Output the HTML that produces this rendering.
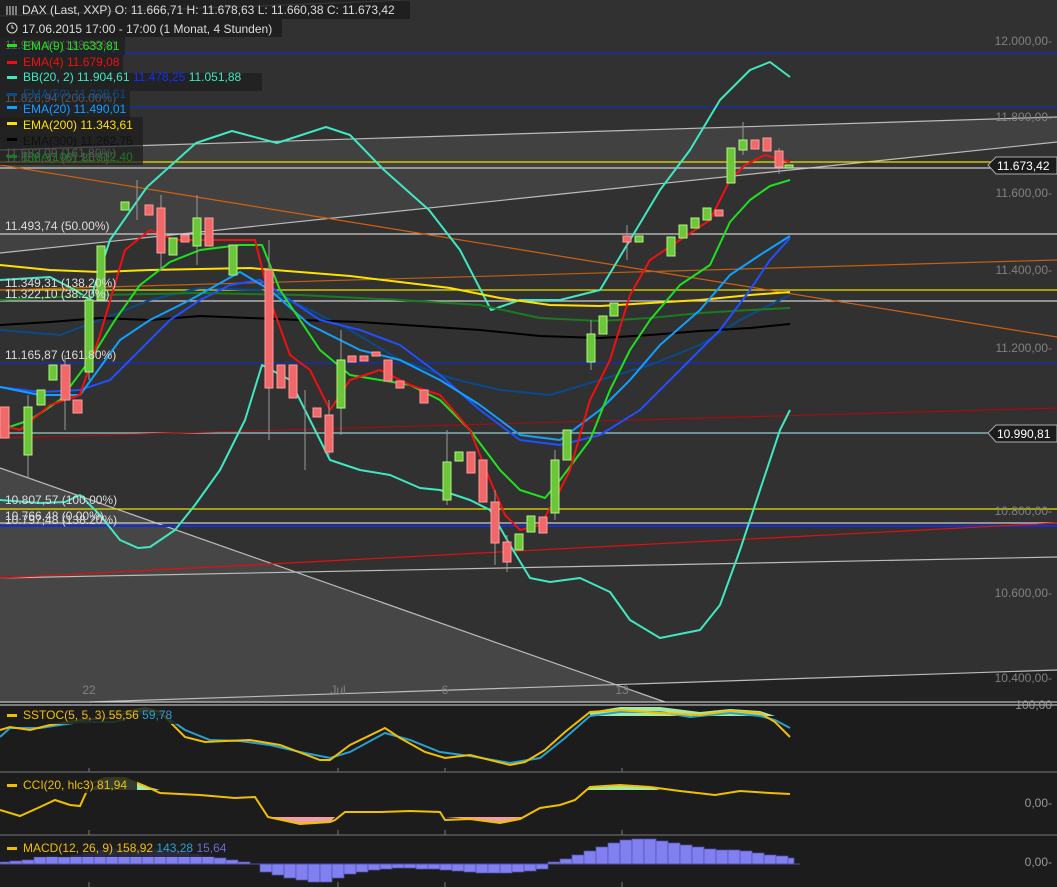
<!DOCTYPE html>
<html><head><meta charset="utf-8"><style>
html,body{margin:0;padding:0;background:#1c1c1c;}
svg{display:block;font-family:"Liberation Sans",sans-serif;}
</style></head><body>
<svg width="1057" height="887" viewBox="0 0 1057 887" xmlns="http://www.w3.org/2000/svg">
<rect x="0" y="0" width="1057" height="703" fill="#313131"/>
<polygon points="90,702 1057,670 1057,703" fill="#222"/>
<polygon points="0,468 665,702 0,702" fill="#464646"/>
<polygon points="0,150 1057,117 1057,142 0,253" fill="#414141"/>
<polygon points="0,0 410,0 0,16" fill="#404040"/>
<g fill="none" stroke-width="1.2">
<line x1="0" y1="16" x2="410" y2="0" stroke="#bbb"/>
<line x1="0" y1="150" x2="1057" y2="117" stroke="#bbb"/>
<line x1="0" y1="253" x2="1057" y2="142" stroke="#bbb"/>
<line x1="0" y1="468" x2="665" y2="702" stroke="#bbb"/>
<line x1="90" y1="702" x2="1057" y2="670" stroke="#bbb"/>
<line x1="0" y1="578" x2="1057" y2="557" stroke="#bbb"/>
<line x1="0" y1="53" x2="1057" y2="53" stroke="#1030c0"/>
<line x1="0" y1="107" x2="1057" y2="107" stroke="#1030c0"/>
<line x1="0" y1="162" x2="1057" y2="162" stroke="#e8e000"/>
<line x1="0" y1="168" x2="1057" y2="168" stroke="#ccc"/>
<line x1="0" y1="234" x2="1057" y2="234" stroke="#ccc"/>
<line x1="0" y1="290" x2="1057" y2="290" stroke="#e8e000"/>
<line x1="0" y1="301" x2="1057" y2="301" stroke="#ccc"/>
<line x1="0" y1="363" x2="1057" y2="363" stroke="#1030c0"/>
<line x1="0" y1="433" x2="1057" y2="433" stroke="#9cc"/>
<line x1="0" y1="509" x2="1057" y2="509" stroke="#e8e000"/>
<line x1="0" y1="523" x2="1057" y2="523" stroke="#ccc"/>
<line x1="0" y1="526" x2="1057" y2="526" stroke="#1030e0" stroke-width="2"/>
<line x1="0" y1="165" x2="1057" y2="337" stroke="#d06010"/>
<line x1="0" y1="290" x2="1057" y2="260" stroke="#c06010"/>
<line x1="0" y1="438" x2="1057" y2="408" stroke="#a01010"/>
<line x1="0" y1="578" x2="1057" y2="523" stroke="#e01010"/>
</g>
<g fill="none" stroke-width="2" stroke-linejoin="round">
<polyline stroke="#40e8c0" points="0,280 50,277 75,290 90,300 110,240 147,187 196,143 232,131 277,143 326,127 350,135 384,170 429,210 460,250 491,310 520,300 560,300 600,290 630,240 660,190 690,150 720,100 750,70 770,62 790,77"/>
<polyline stroke="#40e8c0" points="0,500 40,503 65,502 80,495 100,515 120,540 138,548 150,547 175,530 195,505 220,470 245,420 262,365 290,380 330,460 360,470 390,475 420,488 440,490 470,500 490,510 510,545 530,578 550,582 580,578 610,592 630,620 660,638 700,630 720,605 740,550 760,490 780,430 790,410"/>
<polyline stroke="#0a4a8a" points="0,330 60,335 100,320 150,300 200,288 260,290 300,305 350,330 400,360 450,378 500,390 550,395 600,380 650,365 700,345 740,320 790,295"/>
<polyline stroke="#1a7a20" points="0,300 100,295 200,293 300,295 400,300 480,305 540,318 600,321 650,318 700,313 750,310 790,308"/>
<polyline stroke="#000" points="0,325 50,322 100,318 150,320 200,316 250,318 300,320 360,322 420,326 480,330 540,336 600,338 650,335 700,331 750,328 790,324"/>
<polyline stroke="#ffe000" points="0,265 50,270 100,272 150,270 250,268 300,272 350,276 400,282 450,288 500,298 550,305 600,306 650,303 700,300 750,295 790,292"/>
<polyline stroke="#2050ff" points="0,387 40,392 80,390 110,380 140,350 170,320 200,300 230,285 260,280 290,300 320,320 360,330 400,345 440,375 480,410 520,440 560,445 600,435 640,410 680,370 720,330 750,290 770,260 790,238"/>
<polyline stroke="#10a0ff" points="0,387 40,395 80,395 120,340 150,320 190,300 240,272 270,290 310,325 360,350 400,360 440,380 480,405 520,435 560,440 600,410 630,380 660,345 700,310 730,275 760,255 790,236"/>
<polyline stroke="#20e020" points="0,430 30,420 60,400 90,360 115,320 140,285 170,262 200,250 240,245 262,245 280,290 300,320 320,350 350,375 380,380 410,385 440,400 470,430 500,470 520,490 545,498 560,480 590,440 610,390 630,350 650,320 680,285 710,265 730,222 750,200 770,186 790,180"/>
<polyline stroke="#f01010" points="0,425 20,430 50,405 80,395 100,335 125,250 150,230 175,240 210,240 255,240 270,300 290,355 310,370 330,410 350,380 380,370 410,385 440,395 470,430 490,480 505,515 520,530 540,525 555,500 570,470 590,400 610,360 630,295 650,260 680,240 710,220 730,180 745,165 765,155 790,162"/>
</g>
<g stroke-width="1">
<g stroke="#999">
<line x1="28" y1="395" x2="28" y2="478"/><line x1="65" y1="355" x2="65" y2="430"/><line x1="89" y1="290" x2="89" y2="380"/><line x1="137" y1="180" x2="137" y2="220"/><line x1="161" y1="195" x2="161" y2="270"/><line x1="197" y1="195" x2="197" y2="265"/><line x1="269" y1="240" x2="269" y2="440"/><line x1="305" y1="390" x2="305" y2="470"/><line x1="329" y1="400" x2="329" y2="455"/><line x1="341" y1="330" x2="341" y2="435"/><line x1="447" y1="430" x2="447" y2="505"/><line x1="495" y1="490" x2="495" y2="565"/><line x1="507" y1="535" x2="507" y2="572"/><line x1="555" y1="450" x2="555" y2="520"/><line x1="591" y1="320" x2="591" y2="370"/><line x1="627" y1="225" x2="627" y2="260"/><line x1="743" y1="122" x2="743" y2="155"/><line x1="779" y1="148" x2="779" y2="174"/>
</g>
<g fill="#f06868" stroke="#ff9c9c">
<rect x="0" y="407" width="9" height="31"/><rect x="61" y="365" width="9" height="35"/><rect x="73" y="400" width="9" height="13"/><rect x="145" y="205" width="8" height="10"/><rect x="157" y="208" width="8" height="45"/><rect x="181" y="235" width="8" height="7"/><rect x="205" y="218" width="8" height="28"/><rect x="265" y="270" width="8" height="118"/><rect x="277" y="365" width="8" height="23"/><rect x="289" y="365" width="8" height="33"/><rect x="313" y="408" width="8" height="9"/><rect x="325" y="415" width="8" height="37"/><rect x="348" y="356" width="8" height="6"/><rect x="360" y="356" width="8" height="5"/><rect x="372" y="352" width="8" height="4"/><rect x="384" y="360" width="8" height="21"/><rect x="396" y="381" width="8" height="7"/><rect x="420" y="390" width="8" height="13"/><rect x="467" y="452" width="8" height="21"/><rect x="479" y="460" width="8" height="42"/><rect x="491" y="502" width="8" height="41"/><rect x="503" y="542" width="8" height="20"/><rect x="539" y="517" width="8" height="16"/><rect x="623" y="236" width="8" height="6"/><rect x="715" y="210" width="8" height="6"/><rect x="751" y="140" width="8" height="9"/><rect x="763" y="138" width="8" height="13"/><rect x="775" y="151" width="8" height="16"/>
</g>
<g fill="#6cc63a" stroke="#b4f284">
<rect x="24" y="407" width="8" height="48"/><rect x="37" y="390" width="8" height="15"/><rect x="49" y="365" width="8" height="15"/><rect x="85" y="300" width="8" height="72"/><rect x="97" y="246" width="8" height="54"/><rect x="121" y="202" width="8" height="8"/><rect x="169" y="238" width="8" height="17"/><rect x="193" y="218" width="8" height="28"/><rect x="229" y="245" width="8" height="30"/><rect x="337" y="360" width="8" height="48"/><rect x="443" y="462" width="8" height="38"/><rect x="455" y="452" width="8" height="9"/><rect x="515" y="534" width="8" height="16"/><rect x="527" y="516" width="8" height="16"/><rect x="551" y="460" width="8" height="53"/><rect x="563" y="430" width="8" height="30"/><rect x="587" y="334" width="8" height="28"/><rect x="599" y="316" width="8" height="18"/><rect x="610" y="303" width="8" height="13"/><rect x="635" y="236" width="8" height="6"/><rect x="667" y="237" width="8" height="19"/><rect x="679" y="225" width="8" height="13"/><rect x="691" y="218" width="8" height="10"/><rect x="703" y="208" width="8" height="12"/><rect x="727" y="148" width="8" height="35"/><rect x="739" y="140" width="8" height="10"/><rect x="785" y="165" width="8" height="3"/>
</g>
</g>
<g fill="#808080" font-size="12" text-anchor="end">
<text x="1052" y="45">12.000,00-</text><text x="1052" y="121">11.800,00-</text><text x="1052" y="197">11.600,00-</text><text x="1052" y="274">11.400,00-</text><text x="1052" y="352">11.200,00-</text><text x="1052" y="515">10.800,00-</text><text x="1052" y="597">10.600,00-</text><text x="1052" y="682">10.400,00-</text>
</g>
<g fill="#808080" font-size="12" text-anchor="middle">
<text x="89" y="694">22</text><text x="338" y="694">Jul</text><text x="445" y="694">6</text><text x="622" y="694">13</text>
</g>
<g fill="#1c1c1c" stroke="#aaa">
<polygon points="988,165 996,157 1057,157 1057,174 996,174"/>
<polygon points="988,433 996,425 1057,425 1057,442 996,442"/>
</g>
<g fill="#fff" font-size="12"><text x="997" y="170">11.673,42</text><text x="997" y="438">10.990,81</text></g>
<g fill="#ddd" font-size="12">
<text x="5" y="230">11.493,74 (50.00%)</text><text x="5" y="287">11.349,31 (138.20%)</text><text x="5" y="298">11.322,10 (38.20%)</text><text x="5" y="359">11.165,87 (161.80%)</text><text x="5" y="504">10.807,57 (100.00%)</text><text x="5" y="520">10.766,48 (0.00%)</text><text x="5" y="524">10.797,48 (138.20%)</text>
<text x="5" y="49">11.966,41 (138.20%)</text><text x="5" y="102">11.826,94 (200.00%)</text><text x="5" y="157">11.683,09 (161.80%)</text><text x="5" y="162">11.665,37 (61.80%)</text>
</g>
<g font-size="12">
<rect x="0" y="0" width="410" height="19" fill="#1c1c1c" opacity="0.85"/>
<rect x="0" y="19" width="282" height="18" fill="#1c1c1c" opacity="0.85"/>
<rect x="0" y="37" width="125" height="18" fill="#1c1c1c" opacity="0.7"/>
<rect x="0" y="55" width="123" height="18" fill="#1c1c1c" opacity="0.7"/>
<rect x="0" y="73" width="262" height="18" fill="#1c1c1c" opacity="0.7"/>
<rect x="0" y="91" width="130" height="18" fill="#1c1c1c" opacity="0.7"/>
<rect x="0" y="109" width="130" height="18" fill="#1c1c1c" opacity="0.7"/>
<rect x="0" y="117" width="143" height="48" fill="#1c1c1c" opacity="0.7"/>
<text x="22" y="14" fill="#ddd">DAX (Last, XXP)  O: 11.666,71  H: 11.678,63  L: 11.660,38  C: 11.673,42</text>
<g stroke="#ddd" stroke-width="1"><line x1="7" y1="6" x2="7" y2="15"/><line x1="10" y1="6" x2="10" y2="15"/><line x1="13" y1="6" x2="13" y2="15"/><line x1="16" y1="6" x2="16" y2="15"/></g>
<circle cx="12" cy="28" r="5" fill="none" stroke="#ddd"/><path d="M12 25v3h2" stroke="#ddd" fill="none"/>
<text x="22" y="33" fill="#ddd">17.06.2015 17:00 - 17:00 (1 Monat, 4 Stunden)</text>
<rect x="7" y="44" width="10" height="3" fill="#20e020"/><text x="23" y="50" fill="#20e020">EMA(9)  11.633,81</text>
<rect x="7" y="61" width="10" height="3" fill="#f01010"/><text x="23" y="66" fill="#f01010">EMA(4)  11.679,08</text>
<rect x="7" y="76" width="10" height="3" fill="#40e8c0"/><text x="23" y="81" fill="#40e8c0">BB(20, 2)  11.904,61  <tspan fill="#1030ff">11.478,25</tspan>  11.051,88</text>
<rect x="7" y="93" width="10" height="3" fill="#0a4a8a"/><text x="23" y="98" fill="#0a4a8a">EMA(50)  11.328,61</text>
<rect x="7" y="106" width="10" height="3" fill="#10a0ff"/><text x="23" y="113" fill="#10a0ff">EMA(20)  11.490,01</text>
<rect x="7" y="122" width="10" height="3" fill="#ffe000"/><text x="23" y="129" fill="#ffe000">EMA(200)  11.343,61</text>
<rect x="7" y="138" width="10" height="3" fill="#000"/><text x="23" y="145" fill="#111">EMA(300)  11.262,75</text>
<rect x="7" y="155" width="10" height="3" fill="#1a7a20"/><text x="23" y="161" fill="#1a7a20">EMA(100)  11.312,40</text>
</g>
<rect x="0" y="704" width="1057" height="183" fill="#1c1c1c"/>
<line x1="0" y1="702" x2="1057" y2="702" stroke="#ddd"/><line x1="0" y1="705" x2="1057" y2="705" stroke="#ddd"/>
<line x1="0" y1="772" x2="1057" y2="772" stroke="#777"/><line x1="0" y1="835" x2="1057" y2="835" stroke="#777"/>
<g stroke="#777"><line x1="89" y1="768" x2="89" y2="772"/><line x1="338" y1="768" x2="338" y2="772"/><line x1="445" y1="768" x2="445" y2="772"/><line x1="622" y1="768" x2="622" y2="772"/><line x1="89" y1="830" x2="89" y2="835"/><line x1="338" y1="830" x2="338" y2="835"/><line x1="445" y1="830" x2="445" y2="835"/><line x1="622" y1="830" x2="622" y2="835"/><line x1="89" y1="882" x2="89" y2="887"/><line x1="338" y1="882" x2="338" y2="887"/><line x1="445" y1="882" x2="445" y2="887"/><line x1="622" y1="882" x2="622" y2="887"/></g>
<polygon points="590,712 620,707 660,707 700,712 730,709 760,711 775,716 590,716" fill="#a8e8a0"/>
<polygon points="120,712 145,707 165,712" fill="#a8e8a0"/>
<g fill="none" stroke-width="2">
<polyline stroke="#2aa0d0" points="0,737 10,728 40,728 80,722 115,722 145,712 165,716 185,730 210,740 240,741 270,745 300,752 330,758 350,752 385,733 410,740 440,752 470,756 510,763 540,758 565,738 590,716 620,712 660,712 690,717 730,713 760,716 775,720 790,728"/>
<polyline stroke="#f0c000" points="0,730 10,727 30,730 50,725 80,720 110,718 130,712 145,709 160,712 185,737 205,742 225,741 250,740 280,745 320,760 330,760 350,745 385,728 400,738 425,752 445,758 470,755 510,765 525,762 545,750 565,732 590,712 620,710 660,713 700,715 730,711 760,713 775,722 790,737"/>
</g>
<polygon points="90,790 105,778 125,778 145,786 160,790" fill="#a8e8a0"/>
<polygon points="585,790 590,787 620,785 650,787 660,790" fill="#a8e8a0"/>
<polygon points="268,817 300,824 330,822 335,817" fill="#f0a0a0"/>
<polygon points="445,817 470,819 500,823 520,819 525,817" fill="#f0a0a0"/>
<polyline fill="none" stroke="#f0c000" stroke-width="2" points="0,810 20,816 40,807 55,800 70,805 80,806 90,784 105,778 125,778 145,786 160,793 200,795 235,798 255,797 268,817 300,824 330,822 335,820 345,812 380,812 410,811 440,812 445,820 470,819 500,823 520,819 540,808 560,805 575,800 590,787 620,785 650,787 680,791 715,795 740,791 770,793 790,794"/>
<g fill="#8080f0" stroke="#5050b0" stroke-width="0.7">
<rect x="0" y="862" width="10" height="2"/><rect x="10" y="861" width="12" height="3"/><rect x="22" y="860" width="12" height="4"/><rect x="34" y="857" width="12" height="7"/><rect x="46" y="856" width="12" height="8"/><rect x="58" y="857" width="12" height="7"/><rect x="70" y="855" width="12" height="9"/><rect x="82" y="853" width="12" height="11"/><rect x="94" y="850" width="12" height="14"/><rect x="106" y="849" width="12" height="15"/><rect x="118" y="849" width="12" height="15"/><rect x="130" y="849" width="12" height="15"/><rect x="142" y="849" width="12" height="15"/><rect x="154" y="849" width="12" height="15"/><rect x="166" y="850" width="12" height="14"/><rect x="178" y="851" width="12" height="13"/><rect x="190" y="854" width="12" height="10"/><rect x="202" y="856" width="12" height="8"/><rect x="214" y="858" width="12" height="6"/><rect x="226" y="860" width="12" height="4"/><rect x="238" y="862" width="12" height="2"/>
<rect x="260" y="864" width="12" height="8"/><rect x="272" y="864" width="12" height="11"/><rect x="284" y="864" width="12" height="14"/><rect x="296" y="864" width="12" height="16"/><rect x="308" y="864" width="12" height="18"/><rect x="320" y="864" width="12" height="18"/><rect x="332" y="864" width="12" height="14"/><rect x="344" y="864" width="12" height="10"/><rect x="356" y="864" width="12" height="8"/><rect x="368" y="864" width="12" height="6"/><rect x="380" y="864" width="12" height="5"/><rect x="392" y="864" width="12" height="4"/><rect x="404" y="864" width="12" height="4"/><rect x="416" y="864" width="12" height="5"/><rect x="428" y="864" width="12" height="5"/><rect x="440" y="864" width="12" height="6"/><rect x="452" y="864" width="12" height="7"/><rect x="464" y="864" width="12" height="8"/><rect x="476" y="864" width="12" height="9"/><rect x="488" y="864" width="12" height="9"/><rect x="500" y="864" width="12" height="9"/><rect x="512" y="864" width="12" height="8"/><rect x="524" y="864" width="12" height="7"/><rect x="536" y="864" width="12" height="5"/>
<rect x="548" y="862" width="12" height="2"/><rect x="560" y="859" width="12" height="5"/><rect x="572" y="855" width="12" height="9"/><rect x="584" y="851" width="12" height="13"/><rect x="596" y="847" width="12" height="17"/><rect x="608" y="843" width="12" height="21"/><rect x="620" y="840" width="12" height="24"/><rect x="632" y="839" width="12" height="25"/><rect x="644" y="839" width="12" height="25"/><rect x="656" y="841" width="12" height="23"/><rect x="668" y="843" width="12" height="21"/><rect x="680" y="845" width="12" height="19"/><rect x="692" y="847" width="12" height="17"/><rect x="704" y="849" width="12" height="15"/><rect x="716" y="850" width="12" height="14"/><rect x="728" y="850" width="12" height="14"/><rect x="740" y="851" width="12" height="13"/><rect x="752" y="853" width="12" height="11"/><rect x="764" y="855" width="12" height="9"/><rect x="776" y="856" width="12" height="8"/><rect x="788" y="858" width="6" height="6"/>
</g>
<line x1="0" y1="864" x2="800" y2="864" stroke="#5050b0"/>
<g font-size="12">
<rect x="2" y="706" width="181" height="18" fill="#1c1c1c" opacity="0.85"/>
<rect x="7" y="714" width="10" height="3" fill="#f0c000"/><text x="23" y="719" fill="#f0c000">SSTOC(5, 5, 3)  55,56  <tspan fill="#2aa0d0">59,78</tspan></text>
<rect x="2" y="775" width="135" height="18" fill="#1c1c1c" opacity="0.85"/>
<rect x="7" y="784" width="10" height="3" fill="#f0c000"/><text x="23" y="789" fill="#f0c000">CCI(20, hlc3)  81,94</text>
<rect x="2" y="839" width="240" height="18" fill="#1c1c1c" opacity="0.85"/>
<rect x="7" y="847" width="10" height="3" fill="#f0c000"/><text x="23" y="852" fill="#f0c000">MACD(12, 26, 9)  158,92  <tspan fill="#2aa0d0">143,28</tspan>  <tspan fill="#6a6ad0">15,64</tspan></text>
</g>
<g fill="#999" font-size="12" text-anchor="end">
<text x="1052" y="709">100,00</text><text x="1052" y="807">0,00-</text><text x="1052" y="866">0,00-</text>
</g>
</svg>
</body></html>
